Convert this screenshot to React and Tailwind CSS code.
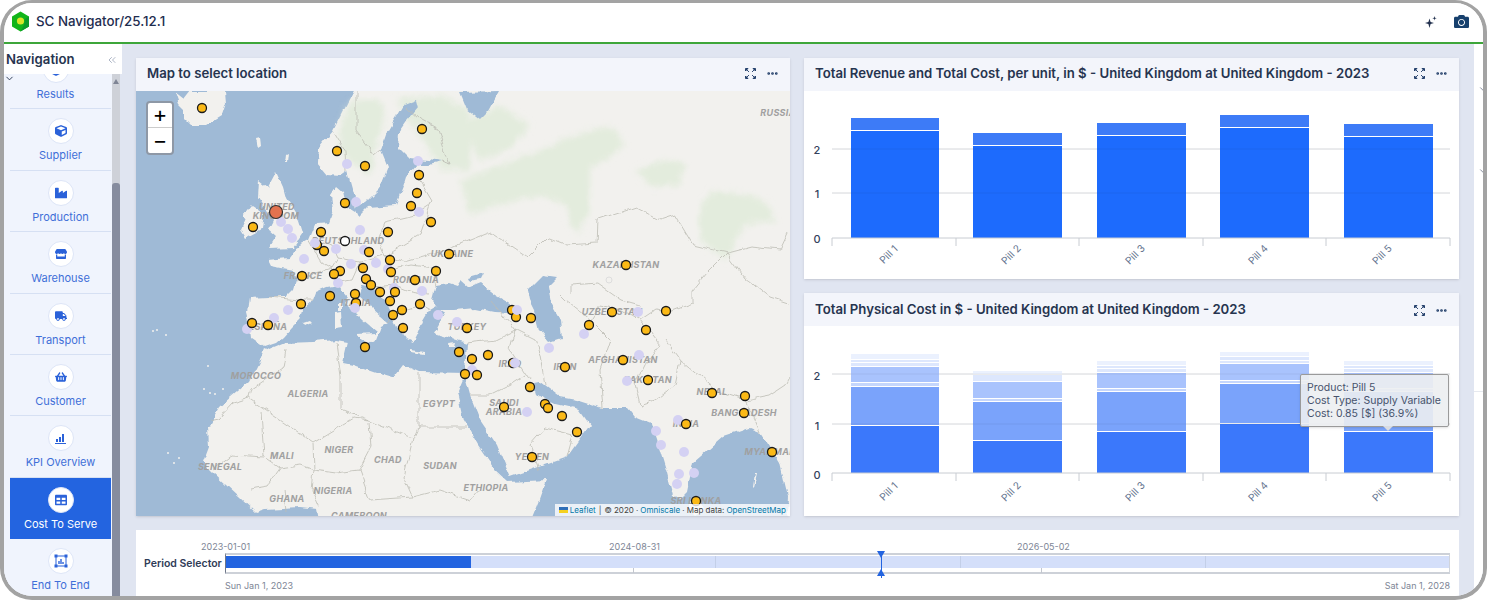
import React from 'react';
import { FaCube, FaCamera, FaIndustry, FaStore, FaTruck, FaShoppingBasket, FaTable } from 'react-icons/fa';
import { ChevronDown, ChevronsLeft, Ellipsis } from 'lucide-react';

const LAND = [
    // Eurasia
    '356,85 343,110 333,130 319,147 318,163 328,175 340,176 346,172 351,190 356,200 355,212 347,207 344,192 337,186 331,195 333,210 329,222 316,223 309,240 296,247 288,258 269,260 272,266 293,270 296,280 293,290 286,297 269,297 249,298 247,312 249,320 251,338 264,347 276,343 283,337 291,328 299,320 302,310 313,300 316,292 327,287 339,285 349,297 344,303 355,312 363,320 376,331 369,340 375,342 381,326 388,322 372,308 358,296 362,285 372,287 385,300 389,310 399,330 407,340 413,343 417,335 423,320 429,310 436,306 445,312 440,320 433,333 444,336 456,340 466,343 464,373 470,395 480,420 497,445 507,470 510,477 530,470 567,457 590,425 578,408 570,405 578,400 603,408 627,408 635,418 652,425 657,440 667,473 673,497 680,500 687,493 693,463 723,437 750,428 760,432 770,447 780,463 788,497 787,513 790,516 800,516 800,80 356,80',
    // Africa
    '264,348 269,350 286,343 313,342 336,340 348,342 343,363 353,365 376,373 393,378 403,365 419,372 466,373 458,392 464,420 478,445 495,470 508,482 547,480 540,500 532,520 320,520 318,510 300,508 265,510 256,513 239,497 213,473 203,463 209,447 208,428 219,407 249,382 259,362',
    // Iceland
    '174,93 183,100 190,91 225,91 226,103 222,115 206,125 191,125 183,117 183,110 178,105',
    // Great Britain
    '276,172 283,187 286,198 299,220 303,233 293,247 269,248 276,237 268,230 273,220 264,207 258,197 259,180 268,187',
    // Ireland
    '251,205 263,213 261,230 246,238 241,230 246,218 243,215',
    // Sicily, Sardinia, Corsica, Crete, Cyprus, Sri Lanka
    '357,334 375,333 372,340 365,344',
    '335,313 341,312 342,327 335,328',
    '337,303 341,303 341,311 337,311',
    '411,350 425,352 425,354 411,352',
    '448,344 456,343 455,347 449,347',
    '690,498 698,495 704,510 696,516 690,510',
    // Small islands
    '256,138 260,137 261,146 258,148',
    '286,155 288,154 287,163 285,163',
    '303,324 309,322 311,324 305,327',
    '755,473 757,473 754,487 753,486',
];

const WATER = [
    // Baltic
    '403,105 416,100 418,108 408,120 399,133 398,147 409,158 429,160 441,162 429,165 416,165 406,177 403,187 396,205 369,207 359,217 355,208 366,203 379,190 388,167 381,150 388,130',
    // Black Sea, Azov
    '432,300 436,285 449,283 458,286 462,280 470,287 480,283 495,295 512,305 515,313 495,312 475,308 455,310 440,310',
    '469,277 483,273 480,279 471,281',
    // Caspian
    '528,290 543,275 557,277 547,287 550,303 560,320 562,338 550,342 540,330 535,310 530,300',
    // White Sea
    '460,93 500,92 490,110 480,120 467,110',
    // Persian Gulf
    '535,383 540,382 560,397 577,400 575,406 567,407 550,403 538,393',
];

const FOREST = [
    '470,120 500,105 530,125 510,150 480,160 470,140',
    '460,180 500,165 540,150 575,135 610,125 625,145 590,170 590,215 575,235 565,205 540,195 500,205 470,215',
    '635,170 665,160 685,165 680,185 650,187',
    '700,205 715,190 745,195 765,200 775,220 745,225 725,260 700,240',
    '340,125 350,100 380,100 385,120 375,150 372,175 348,160 340,150',
    '395,100 440,95 470,110 470,170 440,170 420,135',
];

const BORDERS = [
    // Africa
    '286,350 283,368 251,390 249,398 233,403 219,418 209,420',
    '249,398 313,442 353,418 369,420 341,410 341,377 336,343',
    '261,412 264,457 233,455 213,470',
    '369,420 413,438 418,427 418,373',
    '418,427 466,427',
    '369,422 371,447 359,470 336,473 314,470 313,443',
    '413,438 404,477 413,497 440,490 470,500 482,485',
    '264,457 280,468 300,465 314,470 312,490 320,508',
    '280,468 268,485 250,488',
    '359,470 370,500 413,497',
    '284,490 286,512',
    // Europe
    '333,130 345,150 346,172',
    '356,90 356,130 375,155 381,150',
    '406,107 420,120 438,130 450,165 441,162',
    '316,240 332,245 338,258 332,268 322,262 309,240',
    '338,258 360,262 385,256 420,235 432,200 420,180',
    '385,256 378,240 385,222 415,215 430,205',
    '360,262 352,280 338,282',
    '332,268 310,275 296,280',
    '269,297 300,300 313,300',
    '385,256 405,262 440,252 470,240 490,232 527,257',
    '390,270 412,265 432,268 436,285',
    '372,287 395,285 412,292 430,295',
    '388,322 400,312 420,305 429,310',
    // Central Asia
    '527,257 547,237 567,245 597,243 598,220 637,207 660,220 675,215 693,245 727,253 750,247 780,250 788,233',
    '727,253 745,277 770,297 788,303',
    '727,253 707,273 693,290 693,303 670,312 655,310 640,320 622,310 600,305 590,320 565,300 560,295',
    '572,292 572,285 598,283 622,300 640,305',
    '490,300 515,330 510,350 530,380',
    '466,343 495,340 515,330',
    '515,330 535,340 540,355 545,385',
    '470,395 490,395 510,385 525,375',
    '590,320 610,340 600,370 603,408',
    '640,320 660,345 645,365 635,385 640,405 655,400 675,385 680,360 665,340',
    '680,360 715,390 745,400 770,395 785,385 790,375',
    '745,400 755,420 760,432',
    '567,457 573,435 545,428 530,445 540,470',
];

const ISLET_DOTS = [[153,331],[157,330],[166,335],[208,366],[204,389],[210,393],[215,394],[223,389],[168,453],[179,458],[174,463]];

const MAP_LABELS = [
    ['UNITED', 277, 210], ['KINGDOM', 276, 219], ['DEUTSCHLAND', 348, 244], ['FRANCE', 303, 279], ['ITALIA', 356, 306],
    ['ROMANIA', 416, 283], ['UKRAINE', 452, 257], ['KAZAKHSTAN', 626, 268], ['RUSSIA', 778, 116], ['ESPAÑA', 268, 330],
    ['TURKEY', 467, 330], ['MOROCCO', 256, 379], ['ALGERIA', 308, 397], ['EGYPT', 439, 407], ['MALI', 282, 459],
    ['NIGER', 339, 453], ['CHAD', 388, 463], ['SUDAN', 440, 469], ['SENEGAL', 220, 470], ['NIGERIA', 333, 494],
    ['GHANA', 287, 502], ['CAMEROON', 359, 519], ['ETHIOPIA', 486, 491], ['YEMEN', 532, 460], ['SAUDI', 504, 406],
    ['ARABIA', 504, 415], ['IRAQ', 510, 367], ['IRAN', 565, 370], ['AFGHANISTAN', 623, 363], ['PAKISTAN', 648, 383],
    ['UZBEKISTAN', 612, 315], ['NEPAL', 712, 395], ['BANGLADESH', 744, 416], ['INDIA', 686, 427], ['MYANMAR', 770, 455],
    ['SRI LANKA', 696, 504],
];

const LILAC_UNDER = [[347,164],[356,202],[418,161],[419,212],[281,222],[288,229],[292,238],[360,230],[336,249],[364,250],[304,259],[351,264],[376,263],[388,269],[338,283],[394,288],[422,291],[288,310],[274,318],[247,329],[438,315],[457,322],[638,312],[584,334],[549,348],[639,355],[472,370],[627,381],[527,412],[678,420],[656,431],[661,445],[684,452],[694,473],[679,474],[677,484]];
const LILAC_OVER = [[315,243],[355,308],[517,310],[515,363]];

const SITES = [[202,108],[422,129],[337,151],[365,166],[419,175],[417,193],[411,206],[345,203],[431,222],[253,227],[321,232],[388,232],[317,245],[324,251],[369,252],[449,254],[391,272],[390,260],[436,271],[363,268],[340,271],[334,274],[302,276],[366,279],[415,280],[395,292],[371,285],[380,292],[330,296],[355,294],[356,303],[390,301],[420,304],[301,304],[402,310],[252,323],[268,325],[393,315],[403,328],[365,347],[512,310],[516,317],[531,318],[467,328],[612,312],[589,325],[666,311],[646,330],[623,360],[565,367],[488,355],[472,359],[459,352],[513,363],[465,374],[477,375],[648,380],[530,387],[712,393],[745,396],[744,413],[545,404],[548,408],[504,407],[562,416],[577,432],[686,424],[532,457],[772,452],[696,501],[626,265]];

const BAR_X = [[851, 88], [973, 89], [1097, 89], [1220, 89], [1344, 89]];
const TICKS = [832, 956, 1079, 1203, 1326, 1450];

const revenueBars = [
    [[118, 130, '#3d7bf7'], [131, 238, '#1d6bfd']],
    [[133, 145, '#3d7bf7'], [146, 238, '#1d6bfd']],
    [[123, 135, '#3d7bf7'], [136, 238, '#1d6bfd']],
    [[115, 127, '#3d7bf7'], [128, 238, '#1d6bfd']],
    [[124, 136, '#3d7bf7'], [137, 238, '#1d6bfd']],
];

const C1 = '#3b78fb', C2 = '#7aa3fb', C3 = '#a9c3fd', C4 = '#c5d6fc', C5 = '#dde7fd', C6 = '#ebf1fe';

const physicalBars = [
    [[426, 473, C1], [387, 425, C2], [383, 386, C4], [367, 382, C3], [363, 366, C5], [360, 362, C5], [354, 359, C6]],
    [[441, 473, C1], [402, 440, C2], [399, 401, C4], [382, 398, C3], [375, 381, C5], [371, 374, C6]],
    [[432, 473, C1], [392, 431, C2], [389, 391, C4], [373, 388, C3], [369, 372, C5], [366, 368, C5], [361, 365, C6]],
    [[424, 473, C1], [384, 423, C2], [381, 383, C4], [364, 380, C3], [361, 363, C5], [357, 360, C5], [352, 356, C6]],
    [[432, 473, C1], [392, 431, C2], [389, 391, C4], [373, 388, C3], [369, 372, C5], [366, 368, C5], [361, 365, C6]],
];

const KpiIcon = () => (
    <svg width="13" height="13" viewBox="0 0 13 13" fill="#2b62d9">
        <rect x="2" y="7" width="2" height="3" />
        <rect x="5" y="5" width="2" height="5" />
        <rect x="8" y="2" width="2" height="8" />
        <rect x="1" y="11" width="11" height="1" />
    </svg>
);

const EndIcon = () => (
    <svg width="14" height="14" viewBox="0 0 14 14" fill="none" stroke="#2b62d9">
        <rect x="2" y="2" width="10" height="10" />
        <path d="M5 10V7M7 10V5M9 10V8" strokeWidth="1.4" />
        <g fill="#2b62d9" stroke="none">
            <rect x="0.5" y="0.5" width="3" height="3" />
            <rect x="10.5" y="0.5" width="3" height="3" />
            <rect x="0.5" y="10.5" width="3" height="3" />
            <rect x="10.5" y="10.5" width="3" height="3" />
        </g>
    </svg>
);

const NAV_ITEMS = [
    { label: 'Results', icon: <FaCube size={12} />, shifted: true },
    { label: 'Supplier', icon: <FaCube size={12} /> },
    { label: 'Production', icon: <FaIndustry size={12} /> },
    { label: 'Warehouse', icon: <FaStore size={12} /> },
    { label: 'Transport', icon: <FaTruck size={12} /> },
    { label: 'Customer', icon: <FaShoppingBasket size={12} /> },
    { label: 'KPI Overview', icon: <KpiIcon /> },
    { label: 'Cost To Serve', icon: <FaTable size={12} />, active: true },
    { label: 'End To End', icon: <EndIcon /> },
];

const Logo = () => (
    <svg width="19" height="21" viewBox="0 0 19 21">
        <path d="M9.5 0.5 18 5.5V15.5L9.5 20.5 1 15.5V5.5Z" fill="#12b51a" />
        <path d="M9.5 20.5 18 15.5V5.5L14 8 13 14Z" fill="#0b9a2a" />
        <circle cx="9.5" cy="10" r="3.6" fill="#d8e52a" />
    </svg>
);

const Sparkle = () => (
    <svg width="14" height="14" viewBox="0 0 14 14" fill="#24324f">
        <path d="M5.5 3.5 6.6 7 10 8 6.6 9 5.5 13 4.4 9 1 8 4.4 7Z" />
        <path d="M10.5 1 11 2.7 12.7 3.2 11 3.7 10.5 5.4 10 3.7 8.3 3.2 10 2.7Z" />
    </svg>
);

const ExpandIcon = () => (
    <svg width="11" height="11" viewBox="0 0 11 11" fill="#1d3a66" stroke="#1d3a66" strokeWidth="0.9">
        <path d="M0.5 0.5H3L0.5 3ZM1.5 1.5 4 4" />
        <path d="M10.5 0.5H8L10.5 3ZM9.5 1.5 7 4" />
        <path d="M0.5 10.5H3L0.5 8ZM1.5 9.5 4 7" />
        <path d="M10.5 10.5H8L10.5 8ZM9.5 9.5 7 7" />
    </svg>
);

const Card = ({ title, className, headerClass = 'pb-[2px]', children }) => (
    <div className={`flex flex-col bg-white shadow-sm ${className}`}>
        <div className={`flex h-[33px] shrink-0 items-center justify-between bg-[#f3f5fb] pl-[11px] pr-[11px] ${headerClass}`}>
            <span className="text-[13.2px] font-semibold text-[#26344f]">{title}</span>
            <div className="flex items-center gap-[10px]">
                <ExpandIcon />
                <Ellipsis size={13} strokeWidth={3} className="text-[#1d3a66]" />
            </div>
        </div>
        {children}
    </div>
);

const MapDrawing = () => (
    <svg className="absolute inset-0 h-full w-full" viewBox="136 91 654 425">
        <defs>
            <filter id="soft"><feGaussianBlur stdDeviation="3" /></filter>
            <filter id="coast" x="0" y="0" width="100%" height="100%" colorInterpolationFilters="sRGB">
                <feTurbulence type="fractalNoise" baseFrequency="0.07" numOctaves="3" seed="4" result="noise" />
                <feDisplacementMap in="SourceGraphic" in2="noise" scale="7" xChannelSelector="R" yChannelSelector="G" />
                <feGaussianBlur stdDeviation="0.35" />
            </filter>
        </defs>
        <rect x="136" y="91" width="654" height="425" fill="#9fbad6" />
        <g filter="url(#coast)">
            {LAND.map((p, i) => <polygon key={i} points={p} fill="#f2f1ee" />)}
            <g filter="url(#soft)">
                {FOREST.map((p, i) => <polygon key={i} points={p} fill="#e3ecdd" />)}
            </g>
            {WATER.map((p, i) => <polygon key={i} points={p} fill="#9fbad6" />)}
            {BORDERS.map((p, i) => <polyline key={i} points={p} fill="none" stroke="#bcbcb4" strokeWidth="0.8" />)}
        </g>
        {ISLET_DOTS.map(([x, y], i) => <circle key={i} cx={x} cy={y} r="1" fill="#f2f1ee" />)}
        <circle cx="609" cy="280" r="3" fill="none" stroke="#ddd" strokeWidth="1" />
        {MAP_LABELS.map(([name, x, y]) => (
            <text key={name} x={x} y={y} textAnchor="middle" fontSize="9" fontWeight="700" fontStyle="italic" fill="#a0a0a0" letterSpacing="0.3">{name}</text>
        ))}
        {LILAC_UNDER.map(([x, y], i) => <circle key={i} cx={x} cy={y} r="5" fill="#d4d1f3" />)}
        {SITES.map(([x, y], i) => <circle key={i} cx={x} cy={y} r="4.5" fill="#fbb916" stroke="#1a1a1a" strokeWidth="1.3" />)}
        {LILAC_OVER.map(([x, y], i) => <circle key={i} cx={x} cy={y} r="5" fill="#d4d1f3" />)}
        <circle cx="345" cy="241" r="4.5" fill="#fff" stroke="#1a1a1a" strokeWidth="1.3" />
        <circle cx="276" cy="212" r="6.5" fill="#e2724f" stroke="#333" strokeWidth="1.2" />
    </svg>
);

const BarChart = ({ top, height, axis, labels, bars, valueDy, pillDy }) => (
    <svg className="block h-full w-full" viewBox={`804 ${top} 655 ${height}`}>
        {labels.slice(1).map(([, y]) => <line key={y} x1="832" x2="1450" y1={y} y2={y} stroke="#e2e4e8" />)}
        {bars.map((segs, i) => segs.map(([y1, y2, color]) => (
            <rect key={`${i}-${y1}`} x={BAR_X[i][0]} y={y1} width={BAR_X[i][1]} height={y2 - y1} fill={color} />
        )))}
        {labels.slice(1).map(([, y]) => <line key={y} x1="832" x2="1450" y1={y} y2={y} stroke="#000" strokeOpacity="0.06" />)}
        <line x1="832" x2="1450" y1={axis} y2={axis} stroke="#c8ccd2" />
        {TICKS.map((x) => <line key={x} x1={x} x2={x} y1={axis} y2={axis + 8} stroke="#c8ccd2" />)}
        {labels.map(([t, y]) => (
            <text key={t} x="817" y={y + valueDy} textAnchor="middle" fontSize="11" fontWeight="500" fill="#33415c">{t}</text>
        ))}
        {BAR_X.map(([x, w], i) => (
            <text key={x} transform={`translate(${x + w / 2 - 4} ${axis + pillDy}) rotate(-45)`} textAnchor="middle" fontSize="10" fill="#66748f">{`Pill ${i + 1}`}</text>
        ))}
    </svg>
);

const PeriodSelector = () => (
    <div className="mt-[14px] flex h-[66px] flex-col bg-white pl-[8px] pr-[9px] pt-[10px]">
        <div className="ml-[81px] flex h-[13px] text-[9px] leading-[13px] text-[#7d8595]">
            <span className="w-[408px] -translate-x-[24px]">2023-01-01</span>
            <span className="w-[408px] -translate-x-[24px]">2024-08-31</span>
            <span className="-translate-x-[24px]">2026-05-02</span>
        </div>
        <div className="flex items-center">
            <span className="w-[81px] shrink-0 whitespace-nowrap text-[10.5px] font-semibold text-[#2f3c57]">Period Selector</span>
            <div className="relative h-[21px] flex-1 border-x border-y-2 border-x-[#d0d4dc] border-y-[#cdd1d8] border-l-[#6d7688] py-[1px]">
                <div className="flex h-[12px] bg-[#d4dffa]">
                    <div className="h-full w-[245px] bg-[#2364e0]" />
                    <div className="h-full w-[245px] border-r border-[#c3cfe8]" />
                    <div className="h-full w-[245px] border-r border-[#c3cfe8]" />
                    <div className="h-full w-[245px] border-r border-[#c3cfe8]" />
                </div>
                <div className="absolute -top-[4px] left-[655px] h-[27px] w-px bg-[#2364e0]" />
                <div className="absolute -top-[4px] left-[651px] h-0 w-0 border-x-[4px] border-t-[7px] border-x-transparent border-t-[#2364e0]" />
                <div className="absolute -bottom-[4px] left-[651px] h-0 w-0 border-x-[4px] border-b-[7px] border-x-transparent border-b-[#2364e0]" />
                <div className="absolute -bottom-[1px] left-[407px] h-[5px] w-px bg-[#c3c7cf]" />
                <div className="absolute -bottom-[1px] left-[815px] h-[5px] w-px bg-[#c3c7cf]" />
            </div>
        </div>
        <div className="ml-[81px] mt-[5px] flex justify-between text-[9px] leading-[13px] text-[#7d8595]">
            <span>Sun Jan 1, 2023</span>
            <span>Sat Jan 1, 2028</span>
        </div>
    </div>
);

const Sidebar = () => (
    <aside className="flex w-[118px] shrink-0 flex-col overflow-hidden">
        <div className="relative z-10 flex h-[30px] shrink-0 items-center justify-between bg-white pl-[2px] pr-[4px] pt-[2px]">
            <span className="text-[13.2px] font-semibold text-[#26344f]">Navigation</span>
            <ChevronsLeft size={12} className="text-[#aeb6c6]" />
        </div>
        <div className="relative flex min-h-0 w-[116px] flex-1 bg-[#f0f4fd] pl-[6px]">
            <ChevronDown size={11} className="absolute left-[0px] top-[-1px] z-10 text-[#26344f]" />
            <div className="-mt-[26px] w-[101px] shrink-0">
                {NAV_ITEMS.map((item) => (
                    <div
                        key={item.label}
                        className={`flex h-[61.4px] flex-col items-center gap-[4px] pt-[9px] ${item.active ? 'bg-[#2364e0]' : 'border-b border-[#d6e0f3]'} ${item.shifted ? 'pr-[10px]' : ''}`}
                    >
                        <div className="flex h-[26px] w-[26px] shrink-0 items-center justify-center rounded-full border border-[#dde5f7] bg-white text-[#2b62d9]">
                            {item.icon}
                        </div>
                        <span className={`text-[11px] leading-[14px] ${item.active ? 'text-white' : 'text-[#3f6fd8]'}`}>{item.label}</span>
                    </div>
                ))}
            </div>
            <div className="ml-[1px] flex flex-1 flex-col items-center bg-[#ced1d8]">
                <div className="mt-[5px] h-0 w-0 border-x-[3.5px] border-b-[5px] border-x-transparent border-b-[#7f8595]" />
                <div className="mt-[99px] w-full flex-1 rounded-t-[3px] bg-[#868c9e]" />
            </div>
        </div>
    </aside>
);

export default function App() {
    return (
        <div className="h-[600px] w-[1487px] overflow-hidden bg-white font-[Inter,sans-serif]">
            <div className="flex h-full flex-col overflow-hidden rounded-[32px] border-x-4 border-b-4 border-t-[3px] border-[#a3a3a3]">
                <header className="flex h-[41px] shrink-0 items-center justify-between border-b-2 border-[#3da63a] bg-white pb-[2px] pl-[7px] pr-[14px]">
                    <div className="flex items-center gap-[6px]">
                        <Logo />
                        <span className="text-[13.3px] font-medium text-[#1e2d4f]">SC Navigator/25.12.1</span>
                    </div>
                    <div className="flex items-center gap-[16px]">
                        <Sparkle />
                        <FaCamera size={15} className="text-[#17406d]" />
                    </div>
                </header>
                <div className="flex min-h-0 flex-1 bg-[#e0e5f1]">
                    <Sidebar />
                    <main className="w-[1352px] shrink-0 pl-[14px] pr-[15px] pt-[14px]">
                        <div className="flex h-[458px] gap-[14px]">
                            <Card title="Map to select location" className="w-[654px]">
                                <div className="relative flex-1 overflow-hidden">
                                    <MapDrawing />
                                    <div className="absolute left-[10px] top-[10px] flex w-[28px] flex-col overflow-hidden rounded-[4px] border-2 border-[#8e98a6] bg-white text-black">
                                        <div className="flex h-[25px] items-center justify-center border-b border-[#ccc] pb-[2px] text-[22px] leading-none">+</div>
                                        <div className="flex h-[25px] items-center justify-center pb-[2px] text-[22px] leading-none">−</div>
                                    </div>
                                    <div className="absolute bottom-0 right-0 flex h-[12px] items-center gap-[2px] bg-white/80 px-[4px] text-[8px] text-[#444]">
                                        <span className="flex h-[6px] w-[9px] flex-col">
                                            <span className="h-[3px] bg-[#2f6fb8]" />
                                            <span className="h-[3px] bg-[#f5d020]" />
                                        </span>
                                        <span className="text-[#0078a8]">Leaflet</span>
                                        <span className="mx-[1px]">|</span>
                                        <span>© 2020 ·</span>
                                        <span className="text-[#0078a8]">Omniscale</span>
                                        <span>· Map data:</span>
                                        <span className="text-[#0078a8]">OpenStreetMap</span>
                                    </div>
                                </div>
                            </Card>
                            <div className="flex w-[655px] flex-col gap-[14px]">
                                <Card title="Total Revenue and Total Cost, per unit, in $ - United Kingdom at United Kingdom - 2023" className="h-[221px]">
                                    <div className="min-h-0 flex-1">
                                        <BarChart top={91} height={188} axis={238} labels={[['0', 238], ['1', 193], ['2', 149]]} bars={revenueBars} valueDy={5} pillDy={19} />
                                    </div>
                                </Card>
                                <Card title="Total Physical Cost in $ - United Kingdom at United Kingdom - 2023" className="h-[223px]" headerClass="pt-[1px]">
                                    <div className="relative min-h-0 flex-1">
                                        <BarChart top={326} height={190} axis={473} labels={[['0', 473], ['1', 424], ['2', 374]]} bars={physicalBars} valueDy={6} pillDy={21} />
                                        <div className="absolute left-[496px] top-[48px] h-[53px] w-[149px] rounded-[2px] border border-[#9a9a9a] bg-[#eceef1]/90 px-[6px] py-[6px] text-[10.5px] leading-[13px] text-[#46526c] shadow-sm">
                                            <div>Product: Pill 5</div>
                                            <div className="whitespace-nowrap">Cost Type: Supply Variable</div>
                                            <div>Cost: 0.85 [$] (36.9%)</div>
                                            <div className="absolute -bottom-[5px] left-[82px] h-0 w-0 border-x-[5px] border-t-[5px] border-x-transparent border-t-[#d8dbe2]" />
                                        </div>
                                    </div>
                                </Card>
                            </div>
                        </div>
                        <PeriodSelector />
                    </main>
                    <div className="relative flex-1 bg-white">
                        <ChevronDown size={10} className="absolute -right-[5px] top-[40px] text-[#6d7688]" />
                        <ChevronDown size={10} className="absolute -right-[5px] top-[122px] text-[#6d7688]" />
                        <div className="absolute left-0 right-0 top-[347px] h-px bg-[#e6e9ef]" />
                    </div>
                </div>
            </div>
        </div>
    );
}
